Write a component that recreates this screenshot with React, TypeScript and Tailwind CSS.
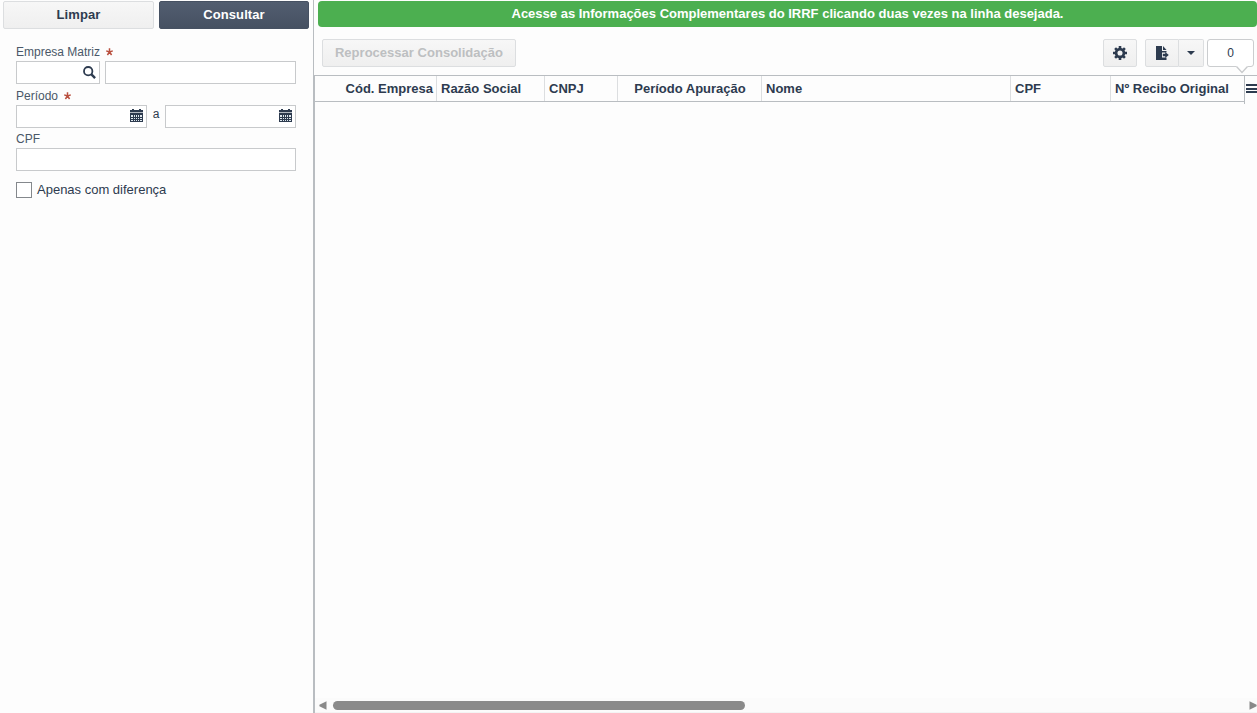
import React from "react";

const button =
  "flex items-center justify-center rounded-[2px] border border-[#dcdee0] bg-linear-to-b from-[#f7f7f7] to-[#efefef]";
const input = "h-[23px] border border-[#c8cacc] bg-white";

function Required() {
  return (
    <svg width="7" height="8" viewBox="0 0 7 8" className="mt-0 ml-1.5" stroke="#b9503f" strokeWidth="1.5">
      <path d="M3.5 .3V4M3.500 4L.2 2.900M3.500 4l3.300-1.100M3.500 4L1.400 7M3.500 4l2.100 3" />
    </svg>
  );
}

function Label({ children, required }: { children: React.ReactNode; required?: boolean }) {
  return (
    <div className="flex h-[18px] items-center text-[12px] leading-[18px] text-[#4a5868]">
      {children}
      {required && <Required />}
    </div>
  );
}

function SearchIcon() {
  return (
    <svg width="13" height="13" viewBox="0 0 13 13" fill="none" stroke="#2d3b4f">
      <circle cx="5.2" cy="5.2" r="4.2" strokeWidth="1.8" />
      <path d="M8.2 8.2l3.9 3.9" strokeWidth="2.4" />
    </svg>
  );
}

function CalendarIcon() {
  return (
    <svg width="13" height="13" viewBox="0 0 13 13" fill="#2d3b4f" shapeRendering="crispEdges">
      <path d="M2 0h2v1h5V0h2v1h2v2H0V1h2zM0 4h13v9H0z" />
      <path d="M0 3h13v1H0z" fill="#b4bac2" />
      <path
        d="M1 6h2v2H1zM4 6h1v2H4zM6 6h1v2H6zM8 6h1v2H8zM10 6h2v2h-2zM1 9h2v1H1zM4 9h1v1H4zM6 9h1v1H6zM8 9h1v1H8zM10 9h2v1h-2zM1 11h2v1H1zM4 11h1v1H4zM6 11h1v1H6zM8 11h1v1H8zM10 11h2v1h-2z"
        fill="#dfe8ee"
      />
    </svg>
  );
}

function GearIcon() {
  return (
    <svg width="14" height="14" viewBox="0 0 14 14" fill="none" stroke="#2d3b4f">
      <circle cx="7" cy="7" r="3.9" strokeWidth="2.7" />
      <path
        d="M7 0v2.4M7 11.6V14M0 7h2.4M11.6 7H14M2.1 2.1l1.7 1.7M10.2 10.2l1.7 1.7M11.9 2.1l-1.7 1.7M3.8 10.2l-1.7 1.7"
        strokeWidth="2.6"
      />
    </svg>
  );
}

function ExportIcon() {
  return (
    <svg width="14" height="14" viewBox="0 0 14 14" fill="#2d3b4f">
      <path d="M1 0h6v5h4.500v1.500H7v5h4.500V14H1z" />
      <path d="M8 0l3.500 4H8zM7.800 7.800h2.400V6l3.600 3-3.600 3v-1.800H7.800z" />
    </svg>
  );
}

const columns = [
  { name: "Cód. Empresa", style: "w-[122px] justify-end pr-[3px]" },
  { name: "Razão Social", style: "w-[108px] pl-1" },
  { name: "CNPJ", style: "w-[73px] pl-1" },
  { name: "Período Apuração", style: "w-[144px] justify-center pl-px" },
  { name: "Nome", style: "w-[249px] pl-1" },
  { name: "CPF", style: "w-[100px] pl-1" },
];

function Filters() {
  return (
    <aside className="flex w-[313px] shrink-0 flex-col">
      <div className="flex gap-[5px] pt-px pl-[3px]">
        <button className={`${button} h-7 w-[151px] text-[13px] font-bold tracking-[0.1px]`}>Limpar</button>
        <button className="h-7 w-[150px] rounded-[2px] border border-[#465162] bg-linear-to-b from-[#525e70] to-[#465162] text-[13px] font-bold tracking-[0.1px] text-white">
          Consultar
        </button>
      </div>
      <div className="flex flex-col px-4 pt-[14px]">
        <Label required>Empresa Matriz</Label>
        <div className="flex gap-[5px]">
          <div className={`${input} flex w-[84px] items-center justify-end pr-[3px]`}>
            <SearchIcon />
          </div>
          <div className={`${input} w-[191px]`} />
        </div>
        <div className="mt-[3px]">
          <Label required>Período</Label>
        </div>
        <div className="flex w-[280px] justify-between">
          <div className={`${input} flex w-[131px] items-start justify-end pt-[3px] pr-[3px]`}>
            <CalendarIcon />
          </div>
          <span className="text-[12px] leading-[18px]">a</span>
          <div className={`${input} flex w-[131px] items-start justify-end pt-[3px] pr-[3px]`}>
            <CalendarIcon />
          </div>
        </div>
        <div className="mt-0.5">
          <Label>CPF</Label>
        </div>
        <div className={`${input} w-[280px]`} />
        <div className="mt-[11px] flex h-4 items-center gap-[5px] text-[13px] leading-4">
          <span className="h-4 w-4 border border-[#84888c] bg-white" />
          <span className="-mt-px">Apenas com diferença</span>
        </div>
      </div>
    </aside>
  );
}

function Toolbar() {
  return (
    <div className="flex h-12 items-start pt-3 pl-[7px]">
      <button className={`${button} h-7 w-[194px] text-[13px] font-bold tracking-[0.02px] text-[#bdbfc1]`}>
        Reprocessar Consolidação
      </button>
      <div className="ml-[587px] flex">
        <button className={`${button} h-7 w-[34px]`}>
          <GearIcon />
        </button>
        <button className={`${button} ml-2 h-7 w-[34px] rounded-r-none`}>
          <ExportIcon />
        </button>
        <button className={`${button} h-7 w-[25px] rounded-l-none border-l-0`}>
          <svg width="8" height="4" viewBox="0 0 8 4" fill="#2d3b4f">
            <path d="M0 0h8L4 4z" />
          </svg>
        </button>
        <div className="relative ml-[3px] flex h-7 w-[47px] items-center justify-center rounded-[3px] border border-[#cbcdcf] bg-white text-[12px]">
          0
          <svg className="absolute top-[26px] left-7" width="12" height="8" viewBox="0 0 12 8">
            <path d="M0 0h12L6 6.7z" fill="#fff" />
            <path d="M.5 .5l5.5 6 5.5-6" fill="none" stroke="#c8cacc" strokeWidth="1.3" />
          </svg>
        </div>
      </div>
    </div>
  );
}

export default function App() {
  return (
    <div className="flex h-[713px] w-[1257px] overflow-hidden bg-[#fdfdfd] font-['Liberation_Sans',Arial,sans-serif] text-[13px] text-[#2d3b4f]">
      <Filters />
      <main className="flex min-w-0 flex-1 flex-col">
        <div className="flex h-[75px] flex-col border-l border-[#b9bdc1] pl-px">
          <div className="mt-px ml-[3px] flex h-[26px] shrink-0 items-center justify-center rounded-[4px] bg-[#4caf50] pb-px text-[13px] font-bold text-white">
            Acesse as Informações Complementares do IRRF clicando duas vezes na linha desejada.
          </div>
          <Toolbar />
        </div>
        <section className="flex flex-1 flex-col border-l-2 border-[#b9bdc1]">
          <div className="flex h-[29px] w-[942px] shrink-0 items-start">
            <div className="flex h-[27px] w-[929px] shrink-0 border-y border-[#b9bdc1] font-bold">
              {columns.map((c) => (
                <div key={c.name} className={`flex shrink-0 items-center border-r border-[#dcdee0] whitespace-nowrap ${c.style}`}>
                  {c.name}
                </div>
              ))}
              <div className="flex items-center pl-1 whitespace-nowrap">Nº Recibo Original</div>
            </div>
            <div className="h-[29px] w-[13px] shrink-0 border-t border-l border-[#b9bdc1]">
              <div className="mt-2 ml-px flex w-[11px] flex-col gap-[1.5px]">
                <span className="h-0.5 bg-[#2d3b4f]" />
                <span className="h-0.5 bg-[#2d3b4f]" />
                <span className="h-0.5 bg-[#2d3b4f]" />
              </div>
            </div>
          </div>
          <div className="flex-1" />
          <div className="flex h-[15px] items-center border-b border-[#f4f4f4] bg-[#fbfbfb] pl-1">
            <svg width="8" height="9" viewBox="0 0 8 9" fill="#898989">
              <path d="M7.5 .2v8.6L.4 5.2v-1.4z" />
            </svg>
            <span className="ml-1.5 h-[9px] w-[412px] rounded-full bg-[#8a8a8a]" />
            <svg className="ml-auto" width="8" height="9" viewBox="0 0 8 9" fill="#898989">
              <path d="M.5 .2v8.6L7.6 5.2v-1.4z" />
            </svg>
          </div>
        </section>
      </main>
    </div>
  );
}
